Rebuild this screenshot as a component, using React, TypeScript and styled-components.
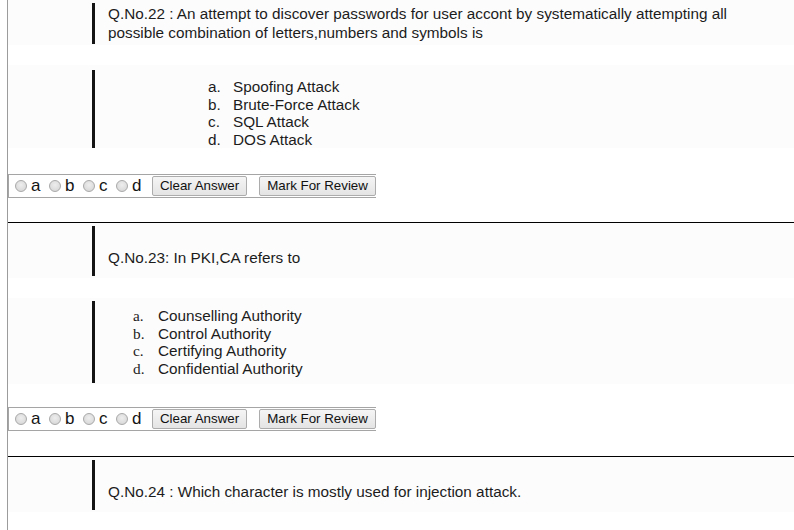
import React from "react";
import styled, { createGlobalStyle } from "styled-components";

const Global = createGlobalStyle`
  html, body { margin: 0; padding: 0; background: #ffffff; }
  body {
    font-family: "Liberation Sans", Arial, sans-serif;
    color: #1e1e1e;
  }
`;

const Page = styled.div`
  padding-left: 7px;
  height: 530px;
  overflow: hidden;
`;

const Frame = styled.main`
  border-left: 1px solid #9c9c9c;
  min-height: 530px;
`;

const Section = styled.section`
  display: flex;
  flex-direction: column;
`;

const Divider = styled.hr`
  margin: 0;
  border: 0;
  height: 0;
  border-top: 1px solid #000000;
`;

const Block = styled.div<{ $mt: number; $pt: number; $pb: number }>`
  margin-top: ${(p) => p.$mt}px;
  padding: ${(p) => p.$pt}px 40px ${(p) => p.$pb}px 84px;
  background: #fcfcfc;
`;

const Quote = styled.div<{ $pt: number; $pb: number; $indent: number; $lh?: number }>`
  border-left: 3px solid #141414;
  padding: ${(p) => p.$pt}px 0 ${(p) => p.$pb}px ${(p) => p.$indent}px;
  font-size: 15.3px;
  line-height: ${(p) => p.$lh ?? 17}px;
  color: #1c1c1c;
`;

const OptionList = styled.ol`
  list-style: none;
  margin: 0;
  padding: 0;
`;

const OptionItem = styled.li`
  display: flex;
  font-size: 15.3px;
  line-height: 17.5px;
`;

const Marker = styled.span<{ $serif?: boolean }>`
  flex: none;
  width: 25px;
  font-family: ${(p) =>
    p.$serif ? '"Liberation Serif", "Times New Roman", serif' : "inherit"};
`;

const AnswerBar = styled.form<{ $mt: number; $mb: number }>`
  display: flex;
  align-items: center;
  box-sizing: border-box;
  width: max-content;
  height: 24px;
  margin: ${(p) => p.$mt}px 0 ${(p) => p.$mb}px;
  border: 1px solid #a5a5a5;
  border-right: none;
  padding-left: 6px;
`;

const Choices = styled.div`
  display: flex;
  align-items: center;
  gap: 8.5px;
  margin-right: 10.5px;
`;

const Choice = styled.label`
  display: flex;
  align-items: center;
  gap: 4px;
  font-size: 17px;
  line-height: 20px;
  color: #141414;
`;

const Radio = styled.input`
  appearance: none;
  -webkit-appearance: none;
  margin: 0;
  width: 12px;
  height: 12px;
  border-radius: 50%;
  box-sizing: border-box;
  border: 1px solid #a9a9a9;
  background: radial-gradient(circle at 50% 40%, #eeeeee 0%, #dcdcdc 65%, #cdcdcd 100%);
`;

const Buttons = styled.div`
  display: flex;
  gap: 12px;
`;

const Button = styled.button`
  margin: 0;
  height: 20px;
  padding: 0 7px;
  font-family: "Liberation Sans", Arial, sans-serif;
  font-size: 13.33px;
  line-height: 16px;
  color: #111111;
  border: 1px solid #acacac;
  border-radius: 2px;
  background: linear-gradient(#f5f5f5, #e4e4e4);
`;

type Opt = { key: string; text: string };

const Options: React.FC<{
  items: Opt[];
  serif?: boolean;
}> = ({ items, serif }) => (
  <OptionList>
    {items.map((o) => (
      <OptionItem key={o.key}>
        <Marker $serif={serif}>{o.key}.</Marker>
        <span>{o.text}</span>
      </OptionItem>
    ))}
  </OptionList>
);

const Answer: React.FC<{ name: string; mt: number; mb: number }> = ({
  name,
  mt,
  mb,
}) => (
  <AnswerBar $mt={mt} $mb={mb} onSubmit={(e) => e.preventDefault()}>
    <Choices>
      {["a", "b", "c", "d"].map((l) => (
        <Choice key={l}>
          <Radio type="radio" name={name} value={l} />
          {l}
        </Choice>
      ))}
    </Choices>
    <Buttons>
      <Button type="button">Clear Answer</Button>
      <Button type="button">Mark For Review</Button>
    </Buttons>
  </AnswerBar>
);

export default function App() {
  return (
    <Page>
      <Global />
      <Frame>
        <Section>
          <Block $mt={0} $pt={3} $pb={1}>
            <Quote $pt={1} $pb={2} $indent={13} $lh={19}>
              Q.No.22 : An attempt to discover passwords for user accont by
              systematically attempting all possible combination of
              letters,numbers and symbols is
            </Quote>
          </Block>
          <Block $mt={20} $pt={5} $pb={0}>
            <Quote $pt={8} $pb={0} $indent={113}>
              <Options
                items={[
                  { key: "a", text: "Spoofing Attack" },
                  { key: "b", text: "Brute-Force Attack" },
                  { key: "c", text: "SQL Attack" },
                  { key: "d", text: "DOS Attack" },
                ]}
              />
            </Quote>
          </Block>
          <Answer name="q22" mt={26} mb={24} />
        </Section>
        <Divider />
        <Section>
          <Block $mt={0} $pt={3} $pb={2}>
            <Quote $pt={23} $pb={10} $indent={13}>
              Q.No.23: In PKI,CA refers to
            </Quote>
          </Block>
          <Block $mt={20} $pt={3} $pb={1}>
            <Quote $pt={6} $pb={6} $indent={38}>
              <Options
                serif
                items={[
                  { key: "a", text: "Counselling Authority" },
                  { key: "b", text: "Control Authority" },
                  { key: "c", text: "Certifying Authority" },
                  { key: "d", text: "Confidential Authority" },
                ]}
              />
            </Quote>
          </Block>
          <Answer name="q23" mt={23} mb={25} />
        </Section>
        <Divider />
        <Section>
          <Block $mt={0} $pt={3} $pb={2}>
            <Quote $pt={23} $pb={10} $indent={13}>
              Q.No.24 : Which character is mostly used for injection attack.
            </Quote>
          </Block>
        </Section>
      </Frame>
    </Page>
  );
}
